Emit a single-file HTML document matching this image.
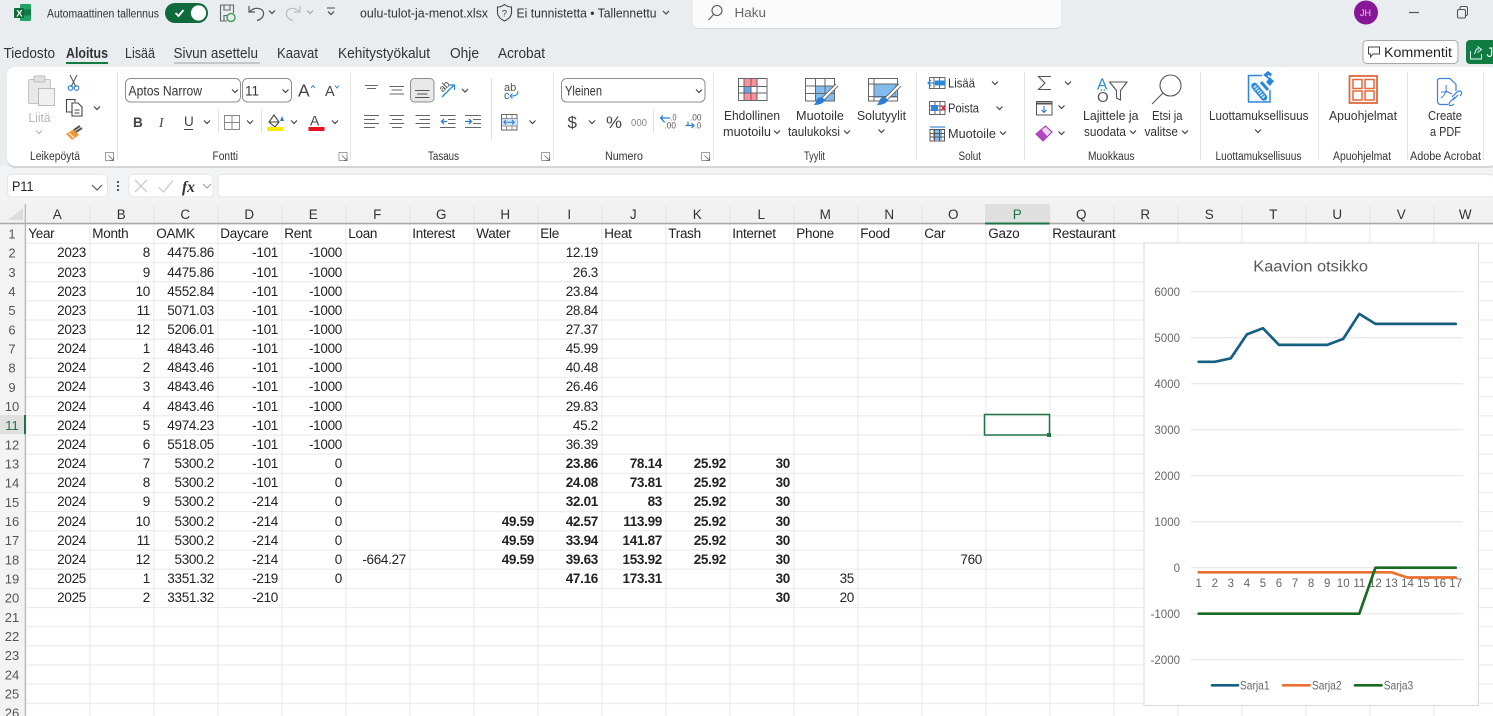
<!DOCTYPE html>
<html lang="fi"><head><meta charset="utf-8"><title>oulu-tulot-ja-menot.xlsx</title>
<style>
html,body{margin:0;padding:0;width:1493px;height:716px;overflow:hidden;background:#fff}
svg{position:absolute;left:0;top:0}
svg text{font-family:"Liberation Sans",sans-serif;fill:#333}
#cells{position:absolute;left:25.3px;top:224.2px;font:13.5px/19.17px "Liberation Sans",sans-serif;letter-spacing:-.3px;color:#222}
.r{display:flex;height:19.17px;white-space:nowrap}
.r i,.r b{display:block;width:64px;flex:none;box-sizing:border-box;text-align:right;padding-right:3.3px;font-style:normal}
.r.h i{text-align:left;padding-left:3px;padding-right:0}
</style></head><body>
<svg width="1493" height="716" viewBox="0 0 1493 716" xmlns="http://www.w3.org/2000/svg">
<defs>
<path id="c" d="M-3-1.5 0 1.5 3-1.5" fill="none" stroke="#444" stroke-width="1.2"/>
<g id="l"><rect x="0" y="0" width="8" height="8" fill="none" stroke="#888" stroke-width=".8"/><path d="M3 3 8 8M8 4.5V8H4.5" fill="none" stroke="#666" stroke-width=".8"/></g>
<pattern id="g" patternUnits="userSpaceOnUse" x="25.3" y="223.5" width="64" height="19.17"><rect width="64" height="1.2" fill="#ebebeb"/><rect width="1.2" height="19.17" fill="#ebebeb"/></pattern>
</defs>
<!-- background -->
<rect width="1493" height="205" fill="#e9edf0"/>
<rect y="166" width="1493" height="39" fill="#f1f3f4"/>
<!-- title bar -->
<rect x="20" y="4" width="11" height="17" rx="1" fill="#21a366"/><rect x="20" y="9.5" width="11" height="6" fill="#107c41"/><rect x="14" y="8" width="10" height="10" rx="1" fill="#0c6b37"/>
<text x="16.3" y="16.5" font-size="9.5" font-weight="bold" style="fill:#fff">X</text>
<text x="47" y="17.5" font-size="11.5" textLength="112" lengthAdjust="spacingAndGlyphs">Automaattinen tallennus</text>
<rect x="165" y="3" width="43" height="20" rx="10" fill="#0f6b3c"/><circle cx="198.5" cy="13" r="7.6" fill="#fff"/><path d="M175.5 13 178.5 16 183.5 10" fill="none" stroke="#fff" stroke-width="1.9"/>
<path d="M220.5 5H233.5V13M220.5 5V21H227M224 5V10H230V5M224 21V15.5H227" fill="none" stroke="#666" stroke-width="1.1"/><circle cx="231" cy="17.5" r="4" fill="none" stroke="#3fa65f" stroke-width="1.5"/>
<path d="M249 6V12H255M249.5 12C254 6.5 263 7.5 263.5 13 264 17 260 20 257 20.5" fill="none" stroke="#555" stroke-width="1.2"/><use href="#c" x="272" y="12"/>
<path d="M300 6V12H294M299.5 12C295 6.5 287 7.5 286.5 13 286 17 290 20 293 20.5" fill="none" stroke="#bbb" stroke-width="1.2"/><use href="#c" x="310" y="12" opacity=".4"/>
<path d="M327 8H335" stroke="#555" stroke-width="1.1"/><use href="#c" x="331" y="13"/>
<text x="360" y="17.5" font-size="12.5" textLength="128" lengthAdjust="spacingAndGlyphs">oulu-tulot-ja-menot.xlsx</text>
<path d="M504.5 4.5C507 6.5 509.5 7 511.5 7V12.5C511.5 16.5 508 19.500 504.5 21 501 19.5 497.5 16.5 497.5 12.5V7C499.5 7 502 6.5 504.5 4.5Z" fill="none" stroke="#444" stroke-width="1.1"/>
<text x="501.8" y="16.5" font-size="9.5">?</text>
<text x="516.5" y="17.5" font-size="12.5" textLength="140" lengthAdjust="spacingAndGlyphs">Ei tunnistetta • Tallennettu</text><use href="#c" x="666" y="12.5"/>
<!-- search -->
<path d="M693 0H1061V23Q1061 28 1056 28H698Q693 28 693 23Z" fill="#d5d8da" transform="translate(0 1)"/>
<path d="M693 0H1061V23Q1061 28 1056 28H698Q693 28 693 23Z" fill="#fbfbfb"/>
<circle cx="717" cy="10.5" r="5" fill="none" stroke="#555" stroke-width="1.1"/><path d="M713.5 14.5 708.5 20" stroke="#555" stroke-width="1.1"/>
<text x="734.5" y="17" font-size="13" textLength="31.5" lengthAdjust="spacingAndGlyphs" style="fill:#666">Haku</text>
<circle cx="1366" cy="12.5" r="12" fill="#881798"/><text x="1360" y="16" font-size="9" style="fill:#e8c9ee">JH</text>
<path d="M1409 12.5H1419" stroke="#555" stroke-width="1.2"/>
<rect x="1457.5" y="9.5" width="8" height="8.5" rx="1.5" fill="none" stroke="#555" stroke-width="1.1"/><path d="M1460 9.5V8Q1460 6.5 1461.5 6.5H1466Q1467.5 6.5 1467.5 8V14Q1467.5 15.5 1466 15.5" fill="none" stroke="#555" stroke-width="1"/>
<!-- tabs -->
<g font-size="14.5">
<text x="3.5" y="58" textLength="51.5" lengthAdjust="spacingAndGlyphs">Tiedosto</text>
<text x="66" y="58" textLength="42" lengthAdjust="spacingAndGlyphs" font-weight="bold">Aloitus</text>
<text x="125" y="58" textLength="30" lengthAdjust="spacingAndGlyphs">Lisää</text>
<text x="173.5" y="58" textLength="84.5" lengthAdjust="spacingAndGlyphs">Sivun asettelu</text>
<text x="277" y="58" textLength="41" lengthAdjust="spacingAndGlyphs">Kaavat</text>
<text x="338" y="58" textLength="92" lengthAdjust="spacingAndGlyphs">Kehitystyökalut</text>
<text x="450" y="58" textLength="29" lengthAdjust="spacingAndGlyphs">Ohje</text>
<text x="498" y="58" textLength="47" lengthAdjust="spacingAndGlyphs">Acrobat</text>
</g>
<rect x="66" y="62" width="42" height="2" fill="#107c41"/><rect x="174" y="62" width="86" height="2" fill="#c4c6c8"/>
<rect x="1363" y="40.5" width="95" height="23" rx="4" fill="#fff" stroke="#a9a9a9"/>
<path d="M1368.5 47H1379.5V54H1373L1370.5 57V54H1368.5Z" fill="none" stroke="#444" stroke-width="1"/>
<text x="1384" y="57" font-size="13.5" textLength="68" lengthAdjust="spacingAndGlyphs" style="fill:#222">Kommentit</text>
<rect x="1466" y="40" width="30" height="24" rx="4" fill="#107c41"/>
<path d="M1470.5 51V59H1481.5V54M1474.5 54 1476.5 49H1479M1477.5 46.5 1481.5 49.5 1477.5 52.5" fill="none" stroke="#dff" stroke-width="1"/>
<text x="1486.5" y="57" font-size="13.5" style="fill:#fff">Ja</text>
<!-- ribbon -->
<rect x="7" y="69" width="1490" height="99" rx="8" fill="#d3d6d8"/>
<rect x="7" y="67" width="1490" height="99" rx="8" fill="#fff"/>
<path d="M117.5 72V160M350.5 72V160M553.5 72V160M713.5 72V160M916.5 72V160M1024.5 72V160M1200.5 72V160M1318.5 72V160M1407.5 72V160M1483.5 72V160" stroke="#e4e4e4"/>
<g font-size="11.5">
<text x="30" y="160" textLength="50" lengthAdjust="spacingAndGlyphs">Leikepöytä</text>
<text x="212.5" y="160" textLength="25.5" lengthAdjust="spacingAndGlyphs">Fontti</text>
<text x="428" y="160" textLength="31" lengthAdjust="spacingAndGlyphs">Tasaus</text>
<text x="605" y="160" textLength="38" lengthAdjust="spacingAndGlyphs">Numero</text>
<text x="804" y="160" textLength="21" lengthAdjust="spacingAndGlyphs">Tyylit</text>
<text x="958.5" y="160" textLength="22.5" lengthAdjust="spacingAndGlyphs">Solut</text>
<text x="1088" y="160" textLength="46.5" lengthAdjust="spacingAndGlyphs">Muokkaus</text>
<text x="1215.5" y="160" textLength="86" lengthAdjust="spacingAndGlyphs">Luottamuksellisuus</text>
<text x="1333" y="160" textLength="58" lengthAdjust="spacingAndGlyphs">Apuohjelmat</text>
<text x="1410" y="160" textLength="71" lengthAdjust="spacingAndGlyphs">Adobe Acrobat</text>
</g>
<use href="#l" x="105.5" y="152.5"/><use href="#l" x="339" y="152.5"/><use href="#l" x="541.5" y="152.5"/><use href="#l" x="701.5" y="152.5"/>
<!-- clipboard -->
<rect x="28.5" y="79.5" width="22" height="24" rx="1.5" fill="#e8e8e8" stroke="#c4c4c4"/><rect x="34" y="76" width="11" height="6" rx="1.5" fill="#e0e0e0" stroke="#bbb"/><rect x="38.5" y="88.5" width="16" height="17" fill="#f0f0f0" stroke="#bbb"/>
<text x="28.5" y="122" font-size="12.5" textLength="22" lengthAdjust="spacingAndGlyphs" style="fill:#b5b5b5">Liitä</text><use href="#c" x="39" y="132" opacity=".4"/>
<path d="M70 75 76 87M77 75 71 87" stroke="#555" stroke-width="1"/><circle cx="70.5" cy="88" r="2.3" fill="none" stroke="#2b7cd3" stroke-width="1.1"/><circle cx="76.5" cy="88" r="2.3" fill="none" stroke="#2b7cd3" stroke-width="1.1"/>
<path d="M72 112H66.5V99.5H75V102M72 103H78L82 107V116H72ZM74.5 110H79.5M74.5 113H79.5" fill="none" stroke="#444" stroke-width="1.1"/><use href="#c" x="97" y="108"/>
<path d="M66 134 74 129 79 135 72 140Z" fill="#ed9a35"/><path d="M74 130 80 126M76 132 82 128" stroke="#555" stroke-width="2"/><path d="M69 133 74 138" stroke="#fff"/>
<!-- font controls -->
<rect x="125.5" y="78.5" width="115" height="23.5" rx="5" fill="#fff" stroke="#8e8e8e"/><text x="128.5" y="95.5" font-size="13.5" textLength="73.5" lengthAdjust="spacingAndGlyphs">Aptos Narrow</text><use href="#c" x="235" y="91"/>
<rect x="242.5" y="78.5" width="49" height="23.5" rx="5" fill="#fff" stroke="#8e8e8e"/><text x="245" y="95.5" font-size="13.5">11</text><use href="#c" x="285.5" y="91"/>
<text x="298" y="96.5" font-size="17.5" style="fill:#444">A</text><path d="M311 88 313 85.5 315 88" fill="none" stroke="#3a78c8"/>
<text x="325" y="96" font-size="14.5" style="fill:#444">A</text><path d="M335 85.5 337 88 339 85.5" fill="none" stroke="#3a78c8"/>
<text x="133" y="127" font-size="13.5" font-weight="bold" style="fill:#444">B</text>
<text x="159" y="127" font-size="13.5" font-style="italic" style="fill:#444;font-family:'Liberation Serif',serif">I</text>
<text x="184" y="126" font-size="13.5" style="fill:#444">U</text><path d="M184 129.5H193" stroke="#444"/><use href="#c" x="207" y="122"/>
<path d="M218.5 110V133M261.5 110V133M653.5 110V133M491.5 78V140" stroke="#e0e0e0"/>
<path d="M224.5 115.5H239.5V129.5H224.5ZM232 115.5V129.5M224.5 122.5H239.5" fill="none" stroke="#888"/><use href="#c" x="250" y="122"/>
<path d="M274 115 279 122 275 127 269 122ZM270 122H279" fill="none" stroke="#444" stroke-width="1.1"/><path d="M280 121 282 116 284 121Z" fill="#2b7cd3"/><rect x="267" y="127" width="16" height="4" fill="#ffeb00"/><use href="#c" x="294" y="122"/>
<text x="310" y="125.5" font-size="14" style="fill:#444">A</text><rect x="308.5" y="127" width="16" height="4" fill="#e81123"/><use href="#c" x="335" y="122"/>
<!-- alignment -->
<path d="M365 85.5H378M367 88.5H376M389.5 86.5H404M391.5 90H402M389.5 94H404" stroke="#666" stroke-width="1.1"/>
<rect x="410.5" y="78.5" width="23.5" height="23.5" rx="4" fill="#e8e8e8" stroke="#8e8e8e"/><path d="M415 90.5H429.5M417 94H427.5M415 97.5H429.5" stroke="#555" stroke-width="1.1"/>
<path d="M442 97 454 85M449.5 85H454.5V90" fill="none" stroke="#2b88d8" stroke-width="1.3"/><text x="439" y="90" font-size="10" transform="rotate(-45 444 87)" style="fill:#444">ab</text><use href="#c" x="465" y="90.5"/>
<text x="504" y="91" font-size="11" style="fill:#555">ab</text><text x="504" y="99" font-size="11" style="fill:#555">c</text><path d="M518 91Q518 96 512 96H510M512.5 93.5 510 96 512.5 98.500" fill="none" stroke="#2b88d8" stroke-width="1.1"/>
<path d="M364 115.5H379M364 119.5H375M364 123.5H379M364 127.5H375M389.5 115.5H404M392 119.5H402M389.5 123.5H404M392 127.5H402M415.5 115.5H430M419.5 119.5H430M415.5 123.5H430M419.5 127.5H430M440 115.5H455.5M448 119.5H455.5M448 123.5H455.5M440 127.5H455.5M465 115.5H481M465 127.5H481M473 119.5H481M473 123.5H481" stroke="#666" stroke-width="1.1"/>
<path d="M447 121.5H441.5M444 119 441.5 121.500 444 124M465 121.5H471.5M469 119 471.5 121.5 469 124" fill="none" stroke="#2b7cd3" stroke-width="1.3"/>
<rect x="501.5" y="114.5" width="15.5" height="15.5" fill="#fff" stroke="#666"/><rect x="502" y="118.5" width="15" height="7.5" fill="#cfe3f6"/><path d="M501.500 118.500H517M501.5 126H517M506.5 114.5V118.5M512 114.5V118.5M506.5 126V130M512 126V130" stroke="#777" stroke-width=".8"/><path d="M504 122.200H514M506 120 503.800 122.200 506 124.400M512 120 514.200 122.200 512 124.400" fill="none" stroke="#2b7cd3"/><use href="#c" x="532.5" y="122"/>
<!-- number -->
<rect x="561.5" y="78.5" width="143.5" height="23.5" rx="5" fill="#fff" stroke="#8e8e8e"/><text x="565" y="95.5" font-size="13.5" textLength="37" lengthAdjust="spacingAndGlyphs">Yleinen</text><use href="#c" x="699" y="91"/>
<text x="567.5" y="128" font-size="17" style="fill:#444">$</text><use href="#c" x="592" y="122"/>
<text x="606" y="128" font-size="17" textLength="16" lengthAdjust="spacingAndGlyphs" style="fill:#444">%</text>
<text x="631" y="126" font-size="10" textLength="16" lengthAdjust="spacingAndGlyphs" style="fill:#888">000</text>
<path d="M670 118H660.500M663 115.500 660.500 118 663 120.500M662 118.500Q663 122 665 122" fill="none" stroke="#2b7cd3" stroke-width="1.2"/><text x="670.5" y="120.5" font-size="9" textLength="6" lengthAdjust="spacingAndGlyphs" style="fill:#555">.0</text><text x="664.5" y="128.5" font-size="9" textLength="11.5" lengthAdjust="spacingAndGlyphs" style="fill:#555">.00</text>
<text x="690" y="120.5" font-size="9" textLength="11.5" lengthAdjust="spacingAndGlyphs" style="fill:#555">.00</text><text x="695" y="128.5" font-size="9" textLength="6" lengthAdjust="spacingAndGlyphs" style="fill:#555">.0</text><path d="M685.500 125.500H694M691.500 123 694 125.500 691.500 128M688 121.500V125" fill="none" stroke="#2b7cd3" stroke-width="1.2"/>
<!-- styles -->
<g stroke="#666" fill="none" stroke-width="1">
<rect x="744" y="78.5" width="13" height="8" fill="#ff8f9a" stroke="#d33"/><rect x="744" y="86.5" width="7" height="6.5" fill="#69a8e8" stroke="#2b7cd3"/><rect x="744" y="93" width="13" height="7.5" fill="#ff8f9a" stroke="#d33"/>
<path d="M738.5 78.5H767V100.5H738.5ZM744 78.5V100.5M751 78.5V100.5M757 78.5V100.5M738.5 86.5H767M738.5 93H767"/>
<rect x="815.5" y="86" width="19" height="15" fill="#82bbee" stroke="none"/>
<path d="M805.5 78.5H834.5V101H805.5ZM815.5 78.5V101M825 78.5V101M805.5 86H834.5M805.5 93.5H834.5"/>
<rect x="874" y="84" width="22" height="13" fill="#82bbee" stroke="#2b88d8"/>
<path d="M868.5 78.5H897.5V101H868.5ZM874 78.5V101M868.5 84H897.5M868.500 96.500H897.500"/>
</g>
<path d="M837 85 823 99M900 85 886 99" fill="none" stroke="#666" stroke-width="4"/><path d="M837 85 823 99M900 85 886 99" fill="none" stroke="#fff" stroke-width="2.200"/>
<path d="M813.500 105Q816 103 816.500 100 818 97 822 97L825 100Q823 105 813.500 105ZM876.500 105Q879 103 879.500 100 881 97 885 97L888 100Q886 105 876.500 105Z" fill="#2b7cd3"/>
<g font-size="12.5">
<text x="724" y="120" textLength="56" lengthAdjust="spacingAndGlyphs">Ehdollinen</text><text x="723" y="136" textLength="48" lengthAdjust="spacingAndGlyphs">muotoilu</text>
<text x="796" y="120" textLength="48" lengthAdjust="spacingAndGlyphs">Muotoile</text><text x="788" y="136" textLength="52" lengthAdjust="spacingAndGlyphs">taulukoksi</text>
<text x="857" y="120" textLength="49" lengthAdjust="spacingAndGlyphs">Solutyylit</text>
<text x="948" y="87.5" textLength="27" lengthAdjust="spacingAndGlyphs">Lisää</text>
<text x="948" y="112.5" textLength="31" lengthAdjust="spacingAndGlyphs">Poista</text>
<text x="948" y="138" textLength="48" lengthAdjust="spacingAndGlyphs">Muotoile</text>
<text x="1083" y="120" textLength="55.5" lengthAdjust="spacingAndGlyphs">Lajittele ja</text><text x="1084" y="136" textLength="42" lengthAdjust="spacingAndGlyphs">suodata</text>
<text x="1152" y="120" textLength="30.5" lengthAdjust="spacingAndGlyphs">Etsi ja</text><text x="1144.5" y="136" textLength="33.5" lengthAdjust="spacingAndGlyphs">valitse</text>
<text x="1209" y="120" textLength="99.5" lengthAdjust="spacingAndGlyphs">Luottamuksellisuus</text>
<text x="1329" y="120" textLength="68" lengthAdjust="spacingAndGlyphs">Apuohjelmat</text>
<text x="1428" y="120" textLength="34" lengthAdjust="spacingAndGlyphs">Create</text><text x="1430" y="136" textLength="31" lengthAdjust="spacingAndGlyphs">a PDF</text>
</g>
<use href="#c" x="777" y="132"/><use href="#c" x="847" y="132"/><use href="#c" x="881.5" y="131"/><use href="#c" x="995" y="83"/><use href="#c" x="999.5" y="108"/><use href="#c" x="1003" y="133"/><use href="#c" x="1068" y="83"/><use href="#c" x="1061.5" y="107"/><use href="#c" x="1061.5" y="133"/><use href="#c" x="1133" y="132"/><use href="#c" x="1185" y="132"/><use href="#c" x="1258" y="131"/>
<!-- cells -->
<g fill="none" stroke="#666"><path d="M929.5 77.5H945V88.5H929.5ZM934 77.5V88.5M939.5 77.5V88.5M929.5 83H945"/><rect x="935" y="80.5" width="10" height="5" fill="#2b88d8" stroke="none"/><path d="M928 83H936M931 80 928 83 931 86" stroke="#2b88d8" stroke-width="1.2"/>
<path d="M929.5 101.5H945V114.5H929.5ZM935 101.5V114.5M940 101.5V114.5M929.5 106H945M929.5 110H945"/><rect x="931" y="105" width="7" height="6" fill="#2b88d8" stroke="none"/></g>
<path d="M941 105.5 945.5 110.5M945.5 105.5 941 110.5" stroke="#e81123" stroke-width="1.2"/>
<g fill="none" stroke="#555"><rect x="930" y="129.5" width="14.5" height="11.5"/><rect x="933" y="130" width="9" height="10" fill="#82bbee" stroke="none"/><path d="M930 133.5H944.5M930 137H944.5M934.5 129.5V141M939.5 129.5V141"/><path d="M930 127H945" stroke="#2b7cd3" stroke-width="1.1"/></g>
<!-- edit -->
<path d="M1051 76.5H1038.500L1045 83 1038.500 89.500H1051" fill="none" stroke="#555" stroke-width="1.1"/>
<rect x="1036.5" y="101.5" width="15.5" height="13.5" fill="#fff" stroke="#555"/><path d="M1036.5 103.5H1052" stroke="#555" stroke-width="2"/><path d="M1044 106V112.5M1041.5 110 1044 112.5 1046.5 110" fill="none" stroke="#2b7cd3" stroke-width="1.1"/>
<path d="M1036 134 1045.5 126 1052 132 1043 141Z" fill="#f3d4ef" stroke="#a23bb0" stroke-width="1.1"/><path d="M1036 134 1041 129 1047 136 1043 141Z" fill="#b146c2"/>
<text x="1097" y="89.5" font-size="15.5" style="fill:#2b88d8">A</text><text x="1097" y="102" font-size="15" style="fill:#555">Ö</text>
<path d="M1109.5 82H1127L1120.500 90.500V100L1116.500 98V90.500Z" fill="none" stroke="#555" stroke-width="1.1"/>
<circle cx="1170.5" cy="85.5" r="10.5" fill="none" stroke="#555" stroke-width="1.1"/><path d="M1163 93 1152 104" stroke="#555" stroke-width="1.1"/>
<!-- trust -->
<path d="M1262 75.500H1248.500V102H1270V90" fill="#f5f9fd" stroke="#2b88d8" stroke-width="1.500"/>
<path d="M1254.500 86 1264 97.500" stroke="#2b88d8" stroke-width="6.500" stroke-linecap="round"/><path d="M1254.500 86 1264 97.500" stroke="#dcecf9" stroke-width="3.500" stroke-dasharray="1.500 1.200"/>
<path d="M1263 75 1268.500 79 1266 82 1270 86 1274 81 1270 77.500 1272 74 1268 71Z" fill="#2b88d8"/><path d="M1261 82 1268 90" stroke="#2b88d8" stroke-width="3"/><path d="M1268 75.500 1270 77" stroke="#fff" stroke-width="1.500"/>
<rect x="1349.5" y="76" width="27.5" height="27" fill="none" stroke="#e0683d" stroke-width="1.8"/><rect x="1353" y="79.5" width="9" height="9" fill="none" stroke="#e0683d" stroke-width="1.5"/><rect x="1365" y="79.5" width="9" height="9" fill="none" stroke="#e0683d" stroke-width="1.5"/><rect x="1353" y="91" width="9" height="9" fill="none" stroke="#e0683d" stroke-width="1.5"/><rect x="1365" y="91" width="9" height="9" fill="none" stroke="#e0683d" stroke-width="1.5"/>
<path d="M1448 104.5H1441Q1437.500 104.5 1437.500 101V81Q1437.500 78.5 1440 78.5H1450L1456 84.5V91" fill="none" stroke="#3f7fe0" stroke-width="1.2"/><path d="M1446 85C1447 92 1444 96 1441 98M1446 91 1452 94M1441 92H1447" fill="none" stroke="#3f7fe0"/>
<path d="M1452 97 1457 92Q1460 90 1461.5 92 1462 94 1460 96M1455 97 1450 102Q1448 105 1450 105.5 1452 106 1454 104M1453 100 1458 95" fill="none" stroke="#3f7fe0" stroke-width="1.2"/>
<!-- formula bar -->
<rect x="7.5" y="174.5" width="100" height="22.5" rx="4" fill="#fff" stroke="#e6e6e6"/>
<text x="12" y="191" font-size="13.5" textLength="21.5" lengthAdjust="spacingAndGlyphs" style="fill:#222">P11</text>
<path d="M92 185 97 190 102 185" fill="none" stroke="#555" stroke-width="1.2"/>
<circle cx="118" cy="182" r="1.1" fill="#444"/><circle cx="118" cy="186" r="1.1" fill="#444"/><circle cx="118" cy="190" r="1.1" fill="#444"/>
<rect x="129" y="174.5" width="84" height="22.5" rx="4" fill="#fff" stroke="#e6e6e6"/>
<path d="M135 180 147 192M147 180 135 192M158.5 187 163.5 192 173 180.5" fill="none" stroke="#c6c6c6" stroke-width="1.2"/>
<text x="182" y="192" font-size="15.5" font-style="italic" style="font-family:'Liberation Serif',serif;fill:#333;font-weight:bold">fx</text>
<path d="M203 184 207 188 211 184" fill="none" stroke="#999"/>
<rect x="218" y="174.5" width="1276" height="22.5" rx="4" fill="#fff" stroke="#e6e6e6"/>
<!-- sheet -->
<rect y="204" width="1493" height="512" fill="#fff"/>
<rect x="25" y="223" width="1468" height="493" fill="url(#g)"/>
<rect y="204" width="1493" height="19" fill="#f1f1f1"/>
<rect y="223" width="25" height="493" fill="#f3f3f3"/>
<path d="M23 208V220H8Z" fill="#dcdcdc"/>
<path d="M0 223.5H1493" stroke="#a8a8a8" stroke-width="1.5"/><path d="M25.3 204V716" stroke="#b4b4b4" stroke-width="1.2"/>
<path d="M89.8 206V222M153.8 206V222M217.8 206V222M281.8 206V222M345.8 206V222M409.8 206V222M473.8 206V222M537.8 206V222M601.8 206V222M665.8 206V222M729.8 206V222M793.8 206V222M857.8 206V222M921.8 206V222M1049.8 206V222M1113.8 206V222M1177.8 206V222M1241.8 206V222M1305.8 206V222M1369.8 206V222M1433.8 206V222" stroke="#e2e2e2"/>
<rect x="985" y="204" width="64.5" height="19" fill="#dfdfdf"/><rect x="985" y="222.5" width="64.5" height="2" fill="#217346"/>
<rect y="415" width="25" height="19.2" fill="#e0e0e0"/><rect x="24" y="415" width="2" height="19.2" fill="#217346"/>
<g font-size="13.5" text-anchor="middle">
<text x="57.3" y="219">A</text><text x="121.3" y="219">B</text><text x="185.3" y="219">C</text><text x="249.3" y="219">D</text><text x="313.3" y="219">E</text><text x="377.3" y="219">F</text><text x="441.3" y="219">G</text><text x="505.3" y="219">H</text><text x="569.3" y="219">I</text><text x="633.3" y="219">J</text><text x="697.3" y="219">K</text><text x="761.3" y="219">L</text><text x="825.3" y="219">M</text><text x="889.3" y="219">N</text><text x="953.3" y="219">O</text><text x="1017.3" y="219" style="fill:#217346">P</text><text x="1081.3" y="219">Q</text><text x="1145.3" y="219">R</text><text x="1209.3" y="219">S</text><text x="1273.3" y="219">T</text><text x="1337.3" y="219">U</text><text x="1401.3" y="219">V</text><text x="1465.3" y="219">W</text>
</g>
<g font-size="13" text-anchor="middle">
<text x="12" y="238.5" style="fill:#555">1</text><text x="12" y="257.7" style="fill:#555">2</text><text x="12" y="276.8" style="fill:#555">3</text><text x="12" y="296" style="fill:#555">4</text><text x="12" y="315.2" style="fill:#555">5</text><text x="12" y="334.3" style="fill:#555">6</text><text x="12" y="353.5" style="fill:#555">7</text><text x="12" y="372.7" style="fill:#555">8</text><text x="12" y="391.9" style="fill:#555">9</text><text x="12" y="411" style="fill:#555">10</text><text x="12" y="430.2" style="fill:#217346">11</text><text x="12" y="449.4" style="fill:#555">12</text><text x="12" y="468.5" style="fill:#555">13</text><text x="12" y="487.7" style="fill:#555">14</text><text x="12" y="506.9" style="fill:#555">15</text><text x="12" y="526" style="fill:#555">16</text><text x="12" y="545.2" style="fill:#555">17</text><text x="12" y="564.4" style="fill:#555">18</text><text x="12" y="583.5" style="fill:#555">19</text><text x="12" y="602.7" style="fill:#555">20</text><text x="12" y="621.9" style="fill:#555">21</text><text x="12" y="641" style="fill:#555">22</text><text x="12" y="660.2" style="fill:#555">23</text><text x="12" y="679.4" style="fill:#555">24</text><text x="12" y="698.5" style="fill:#555">25</text><text x="12" y="717.7" style="fill:#555">26</text>
</g>
<!-- selected cell -->
<rect x="984.5" y="414.5" width="65" height="20.5" fill="none" stroke="#217346" stroke-width="1.5"/><rect x="1047" y="433" width="4" height="4" fill="#217346"/>
<!-- chart -->
<rect x="1144" y="243" width="334.5" height="462.5" fill="#fff" stroke="#d9d9d9"/>
<text x="1253.3" y="271.5" font-size="15.5" textLength="114.7" lengthAdjust="spacingAndGlyphs" style="fill:#595959">Kaavion otsikko</text>
<path d="M1191 291.7H1463M1191 337.7H1463M1191 383.7H1463M1191 429.7H1463M1191 475.7H1463M1191 521.7H1463M1191 567.7H1463M1191 613.7H1463M1191 659.7H1463" stroke="#e6e6e6" stroke-width="1.2"/>
<g font-size="11.5" text-anchor="end"><text x="1180" y="296" style="fill:#666">6000</text><text x="1180" y="342" style="fill:#666">5000</text><text x="1180" y="388" style="fill:#666">4000</text><text x="1180" y="434" style="fill:#666">3000</text><text x="1180" y="480" style="fill:#666">2000</text><text x="1180" y="526" style="fill:#666">1000</text><text x="1180" y="572" style="fill:#666">0</text><text x="1180" y="618" style="fill:#666">-1000</text><text x="1180" y="664" style="fill:#666">-2000</text></g>
<g font-size="11.5" text-anchor="middle"><text x="1198.7" y="587" style="fill:#666">1</text><text x="1214.8" y="587" style="fill:#666">2</text><text x="1230.8" y="587" style="fill:#666">3</text><text x="1246.9" y="587" style="fill:#666">4</text><text x="1262.9" y="587" style="fill:#666">5</text><text x="1279" y="587" style="fill:#666">6</text><text x="1295.1" y="587" style="fill:#666">7</text><text x="1311.1" y="587" style="fill:#666">8</text><text x="1327.2" y="587" style="fill:#666">9</text><text x="1343.2" y="587" style="fill:#666">10</text><text x="1359.3" y="587" style="fill:#666">11</text><text x="1375.4" y="587" style="fill:#666">12</text><text x="1391.4" y="587" style="fill:#666">13</text><text x="1407.5" y="587" style="fill:#666">14</text><text x="1423.5" y="587" style="fill:#666">15</text><text x="1439.6" y="587" style="fill:#666">16</text><text x="1455.7" y="587" style="fill:#666">17</text></g>
<g fill="none" stroke-width="2.7" stroke-linejoin="round" stroke-linecap="round">
<polyline stroke="#156082" points="1198.7,361.8 1214.8,361.8 1230.8,358.3 1246.9,334.4 1262.9,328.2 1279,344.9 1295.1,344.9 1311.1,344.9 1327.2,344.9 1343.2,338.9 1359.3,313.9 1375.4,323.9 1391.4,323.9 1407.5,323.9 1423.5,323.9 1439.6,323.9 1455.7,323.9"/>
<polyline stroke="#e97132" points="1198.7,572.3 1391.4,572.3 1407.5,577.5 1455.7,577.5"/>
<polyline stroke="#196b24" points="1198.7,613.7 1359.3,613.7 1375.4,567.7 1455.7,567.7"/>
<path stroke="#156082" d="M1212 685.3H1238"/><path stroke="#e97132" d="M1283 685.3H1309.5"/><path stroke="#196b24" d="M1355 685.3H1381.5"/>
</g>
<text x="1240" y="689.5" font-size="12" textLength="29.5" lengthAdjust="spacingAndGlyphs" style="fill:#666">Sarja1</text>
<text x="1312" y="689.5" font-size="12" textLength="29.5" lengthAdjust="spacingAndGlyphs" style="fill:#666">Sarja2</text>
<text x="1383.7" y="689.5" font-size="12" textLength="29.5" lengthAdjust="spacingAndGlyphs" style="fill:#666">Sarja3</text>
</svg>
<div id="cells">
<div class="r h"><i>Year</i><i>Month</i><i>OAMK</i><i>Daycare</i><i>Rent</i><i>Loan</i><i>Interest</i><i>Water</i><i>Ele</i><i>Heat</i><i>Trash</i><i>Internet</i><i>Phone</i><i>Food</i><i>Car</i><i>Gazo</i><i>Restaurant</i></div>
<div class="r"><i>2023</i><i>8</i><i>4475.86</i><i>-101</i><i>-1000</i><i></i><i></i><i></i><i>12.19</i></div>
<div class="r"><i>2023</i><i>9</i><i>4475.86</i><i>-101</i><i>-1000</i><i></i><i></i><i></i><i>26.3</i></div>
<div class="r"><i>2023</i><i>10</i><i>4552.84</i><i>-101</i><i>-1000</i><i></i><i></i><i></i><i>23.84</i></div>
<div class="r"><i>2023</i><i>11</i><i>5071.03</i><i>-101</i><i>-1000</i><i></i><i></i><i></i><i>28.84</i></div>
<div class="r"><i>2023</i><i>12</i><i>5206.01</i><i>-101</i><i>-1000</i><i></i><i></i><i></i><i>27.37</i></div>
<div class="r"><i>2024</i><i>1</i><i>4843.46</i><i>-101</i><i>-1000</i><i></i><i></i><i></i><i>45.99</i></div>
<div class="r"><i>2024</i><i>2</i><i>4843.46</i><i>-101</i><i>-1000</i><i></i><i></i><i></i><i>40.48</i></div>
<div class="r"><i>2024</i><i>3</i><i>4843.46</i><i>-101</i><i>-1000</i><i></i><i></i><i></i><i>26.46</i></div>
<div class="r"><i>2024</i><i>4</i><i>4843.46</i><i>-101</i><i>-1000</i><i></i><i></i><i></i><i>29.83</i></div>
<div class="r"><i>2024</i><i>5</i><i>4974.23</i><i>-101</i><i>-1000</i><i></i><i></i><i></i><i>45.2</i></div>
<div class="r"><i>2024</i><i>6</i><i>5518.05</i><i>-101</i><i>-1000</i><i></i><i></i><i></i><i>36.39</i></div>
<div class="r"><i>2024</i><i>7</i><i>5300.2</i><i>-101</i><i>0</i><i></i><i></i><i></i><b>23.86</b><b>78.14</b><b>25.92</b><b>30</b></div>
<div class="r"><i>2024</i><i>8</i><i>5300.2</i><i>-101</i><i>0</i><i></i><i></i><i></i><b>24.08</b><b>73.81</b><b>25.92</b><b>30</b></div>
<div class="r"><i>2024</i><i>9</i><i>5300.2</i><i>-214</i><i>0</i><i></i><i></i><i></i><b>32.01</b><b>83</b><b>25.92</b><b>30</b></div>
<div class="r"><i>2024</i><i>10</i><i>5300.2</i><i>-214</i><i>0</i><i></i><i></i><b>49.59</b><b>42.57</b><b>113.99</b><b>25.92</b><b>30</b></div>
<div class="r"><i>2024</i><i>11</i><i>5300.2</i><i>-214</i><i>0</i><i></i><i></i><b>49.59</b><b>33.94</b><b>141.87</b><b>25.92</b><b>30</b></div>
<div class="r"><i>2024</i><i>12</i><i>5300.2</i><i>-214</i><i>0</i><i>-664.27</i><i></i><b>49.59</b><b>39.63</b><b>153.92</b><b>25.92</b><b>30</b><i></i><i></i><i>760</i></div>
<div class="r"><i>2025</i><i>1</i><i>3351.32</i><i>-219</i><i>0</i><i></i><i></i><i></i><b>47.16</b><b>173.31</b><i></i><b>30</b><i>35</i></div>
<div class="r"><i>2025</i><i>2</i><i>3351.32</i><i>-210</i><i></i><i></i><i></i><i></i><i></i><i></i><i></i><b>30</b><i>20</i></div>
</div>
</body></html>
